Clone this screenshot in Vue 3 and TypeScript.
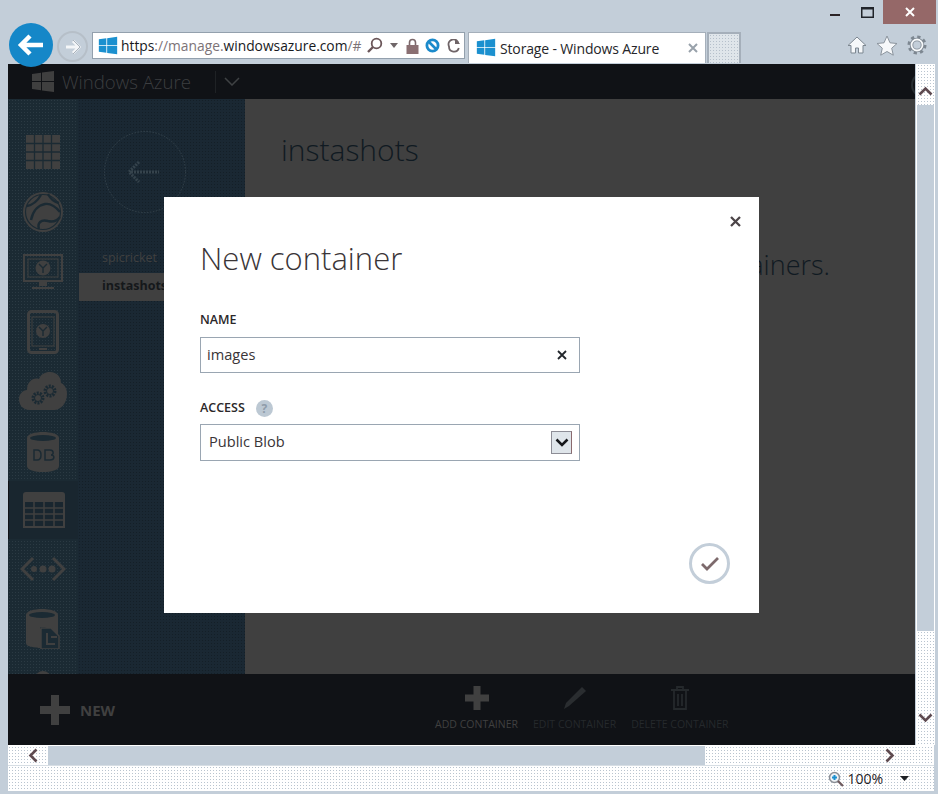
<script setup lang="ts">
import { ref } from 'vue'

const containerName = ref('images')
const access = ref('Public Blob')

const actions = [
  { label: 'ADD CONTAINER', dim: false },
  { label: 'EDIT CONTAINER', dim: true },
  { label: 'DELETE CONTAINER', dim: true },
]
</script>

<template>
  <div class="window">
    <header class="chrome">
      <div class="caption">
        <svg class="cap-min" width="10" height="3" viewBox="0 0 10 3"><rect width="10" height="2" y="1" fill="#2b2326" /></svg>
        <svg class="cap-max" width="13" height="11" viewBox="0 0 13 11"><rect x="0.75" y="0.75" width="11.5" height="9.5" fill="none" stroke="#20242a" stroke-width="1.5" /><rect x="0" y="0" width="13" height="2.5" fill="#20242a" /></svg>
        <div class="cap-close">
          <svg width="10" height="10" viewBox="0 0 10 10"><path d="M1 1l8 8M9 1l-8 8" stroke="#fff" stroke-width="2" /></svg>
        </div>
      </div>
      <div class="toolbar">
        <button class="back">
          <svg width="28" height="24" viewBox="0 0 28 24"><path d="M13 3L4 12l9 9M5 12h21" fill="none" stroke="#fff" stroke-width="4.5" /></svg>
        </button>
        <button class="forward">
          <svg width="18" height="16" viewBox="0 0 18 16"><path d="M9 2l6 6-6 6M14 8H2" fill="none" stroke="#f4f6f8" stroke-width="3" /><path d="M9 1l7 7-7 7" fill="none" stroke="#a9b2bb" stroke-width="1" /></svg>
        </button>
        <div class="address">
          <svg class="win-logo" width="20" height="20" viewBox="0 0 24 24"><path d="M1 4l9-1.200V11H1zM11 2.600L23 1v10H11zM1 12h9v8.200L1 19zM11 12h12v10l-12-1.600z" fill="#1b90cf" /></svg>
          <span class="url">https<span class="url-dim">://manage.</span>windowsazure.com<span class="url-dim">/#</span></span>
          <svg class="addr-icon search" width="17" height="17" viewBox="0 0 17 17"><circle cx="10.5" cy="6.5" r="4.8" fill="none" stroke="#6b5659" stroke-width="1.8" /><path d="M7 10l-5 5" stroke="#6b5659" stroke-width="2.4" /></svg>
          <svg class="addr-icon drop" width="8" height="5" viewBox="0 0 8 5"><path d="M0 0h8L4 5z" fill="#6f6668" /></svg>
          <svg class="addr-icon lock" width="13" height="16" viewBox="0 0 13 16"><path d="M3.5 7V4.5a3 3 0 016 0V7" fill="none" stroke="#7b686b" stroke-width="1.6" /><rect x="0.5" y="7" width="12" height="9" fill="#8a6f72" /></svg>
          <svg class="addr-icon block" width="15" height="15" viewBox="0 0 15 15"><circle cx="7.5" cy="7.5" r="5.6" fill="none" stroke="#1b8acb" stroke-width="2.8" /><path d="M4 4l7 7" stroke="#1b8acb" stroke-width="2.6" /></svg>
          <svg class="addr-icon refresh" width="14" height="14" viewBox="0 0 14 14"><path d="M11.5 5A5 5 0 102 7.500a5 5 0 009.800 1.500" fill="none" stroke="#6f6467" stroke-width="1.8" /><path d="M8 0v5h5z" fill="#6f6467" /></svg>
        </div>
        <div class="tab">
          <svg width="20" height="20" viewBox="0 0 24 24"><path d="M1 4l9-1.200V11H1zM11 2.600L23 1v10H11zM1 12h9v8.200L1 19zM11 12h12v10l-12-1.600z" fill="#1b90cf" /></svg>
          <span class="tab-title">Storage - Windows Azure</span>
          <svg class="tab-close" width="10" height="10" viewBox="0 0 10 10"><path d="M1 1l8 8M9 1l-8 8" stroke="#98a1aa" stroke-width="2" /></svg>
        </div>
        <div class="new-tab"></div>
        <div class="tools">
          <svg width="20" height="20" viewBox="0 0 20 20"><path d="M10 2L1 10.500h3V18h4.500v-5h3v5H16v-7.500h3z" fill="#f6f8fa" stroke="#7d8791" stroke-width="1" /></svg>
          <svg width="22" height="21" viewBox="0 0 22 21"><path d="M11 1l3 6.800 7 .7-5.300 4.700 1.600 7L11 16.500l-6.300 3.700 1.600-7L1 8.500l7-.7z" fill="#f6f8fa" stroke="#8b949d" stroke-width="1" /></svg>
          <svg width="20" height="20" viewBox="0 0 20 20"><circle cx="10" cy="10" r="7.500" fill="none" stroke="#7d8791" stroke-width="4" stroke-dasharray="3 2.890" /><circle cx="10" cy="10" r="5.500" fill="none" stroke="#7d8791" stroke-width="3.500" /><circle cx="10" cy="10" r="5.500" fill="none" stroke="#f6f8fa" stroke-width="1.800" /></svg>
        </div>
      </div>
    </header>

    <div class="middle">
      <div class="page">
        <div class="topbar">
          <svg class="brand-logo" width="24" height="24" viewBox="0 0 24 24"><path d="M1 4l9-1.200V11H1zM11 2.600L23 1v10H11zM1 12h9v8.200L1 19zM11 12h12v10l-12-1.600z" fill="#3f3f3f" /></svg>
          <span class="brand">Windows Azure</span>
          <span class="brand-sep"></span>
          <svg width="16" height="9" viewBox="0 0 16 9"><path d="M1 1l7 7 7-7" fill="none" stroke="#3f4244" stroke-width="1.500" /></svg>
          <span class="avatar"></span>
        </div>

        <div class="body">
          <nav class="rail">
            <div class="rail-item">
              <svg width="34" height="34" viewBox="0 0 34 34"><path d="M0 0h34v34H0z" fill="#404040" /><path d="M8.500 0v34M17 0v34M25.500 0v34M0 8.500h34M0 17h34M0 25.500h34" stroke="#1b2a33" stroke-width="1.300" /></svg>
            </div>
            <div class="rail-item">
              <svg width="42" height="42" viewBox="0 0 42 42"><circle cx="21" cy="21" r="20" fill="#404040" /><path d="M5 15c6-1 11-6 14-11M9 29c2-10 8-15 14-16 6-1 11 3 15 8M17 38c-2-6 2-10 9-8 4 1 9 0 12-4M26 3c2 4 6 8 11 9" fill="none" stroke="#1b2a33" stroke-width="2.400" /><circle cx="21" cy="21" r="17.500" fill="none" stroke="#1b2a33" stroke-width="1.200" /></svg>
            </div>
            <div class="rail-item">
              <svg width="40" height="36" viewBox="0 0 40 36"><rect x="1" y="1" width="38" height="26" fill="none" stroke="#404040" stroke-width="2" /><rect x="5" y="5" width="30" height="18" fill="none" stroke="#404040" stroke-width="1" /><circle cx="20" cy="14" r="7.500" fill="#404040" /><path d="M16 10l4 4 4-4M20 14v5" stroke="#1b2a33" stroke-width="1.400" fill="none" /><path d="M16 27h8v5h-8zM9 33h22v2H9z" fill="#404040" /></svg>
            </div>
            <div class="rail-item">
              <svg width="32" height="44" viewBox="0 0 32 44"><rect x="1.500" y="1.500" width="29" height="41" rx="3" fill="none" stroke="#404040" stroke-width="3" /><rect x="5" y="7" width="22" height="29" fill="none" stroke="#404040" stroke-width="1" /><circle cx="16" cy="21" r="7" fill="#404040" /><path d="M12 17l4 4 4-4M16 21v5" stroke="#1b2a33" stroke-width="1.400" fill="none" /><path d="M12 39h8" stroke="#404040" stroke-width="2" /></svg>
            </div>
            <div class="rail-item">
              <svg width="48" height="40" viewBox="0 0 48 40"><path d="M11 38C3 38 0 32 0 27s4-9 8-9c0-8 6-13 12-11 2-5 6-7 11-7 7 0 11 5 11 11 4 2 6 6 6 11 0 9-6 16-13 16z" fill="#404040" /><circle cx="19" cy="26" r="5" fill="none" stroke="#1b2a33" stroke-width="3" stroke-dasharray="2 1.100" /><circle cx="19" cy="26" r="3.500" fill="none" stroke="#1b2a33" stroke-width="1" /><circle cx="31" cy="19" r="5" fill="none" stroke="#1b2a33" stroke-width="3" stroke-dasharray="2 1.100" /><circle cx="31" cy="19" r="3.500" fill="none" stroke="#1b2a33" stroke-width="1" /></svg>
            </div>
            <div class="rail-item">
              <svg width="32" height="40" viewBox="0 0 32 40"><path d="M0 6c0-8 32-8 32 0v28c0 8-32 8-32 0z" fill="#404040" /><ellipse cx="16" cy="6" rx="13" ry="3" fill="#1b2a33" /><path d="M7 18h3c3 0 4 2 4 5s-1 5-4 5H7zM18 18h5c4 0 4 5 1 5 4 0 4 5-1 5h-5z" fill="none" stroke="#1b2a33" stroke-width="1.500" /></svg>
            </div>
            <div class="rail-item active">
              <svg width="42" height="36" viewBox="0 0 42 36"><path d="M0 3a3 3 0 013-3h36a3 3 0 013 3v7H0z" fill="#404040" /><rect x="1" y="9" width="40" height="26" fill="none" stroke="#404040" stroke-width="2" /><path d="M1 16h40M1 22h40M1 28h40M11 10v25M21 10v25M31 10v25" stroke="#404040" stroke-width="1.500" /></svg>
            </div>
            <div class="rail-item">
              <svg width="46" height="26" viewBox="0 0 46 26"><path d="M13 2L2 13l11 11M33 2l11 11-11 11" fill="none" stroke="#404040" stroke-width="3" /><circle cx="14" cy="13" r="3" fill="#404040" /><circle cx="23" cy="13" r="3.500" fill="#404040" /><circle cx="32" cy="13" r="3.500" fill="#404040" /></svg>
            </div>
            <div class="rail-item">
              <svg width="34" height="40" viewBox="0 0 34 40"><path d="M0 6c0-8 32-8 32 0v28c0 6-14 6-20 5V20h10z" fill="#404040" /><path d="M0 6v28c0 3 4 4 14 5V18h8V6z" fill="#404040" /><ellipse cx="16" cy="6" rx="13" ry="3" fill="#1b2a33" /><path d="M15 19h10l8 8v13H15z" fill="#1b2a33" stroke="#404040" stroke-width="1.500" /><path d="M21 24v11h8M25 28h6" stroke="#404040" stroke-width="2" fill="none" /></svg>
            </div>
            <div class="rail-item">
              <svg width="40" height="40" viewBox="0 0 40 40"><rect x="6" y="14" width="28" height="26" fill="#404040" /><circle cx="20" cy="10" r="8" fill="#404040" /></svg>
            </div>
          </nav>

          <aside class="list">
            <div class="list-head">
              <svg width="84" height="84" viewBox="0 0 84 84"><circle cx="42" cy="42" r="40.500" fill="none" stroke="#35434c" stroke-width="1" stroke-dasharray="1.500 1.500" /><path d="M36 32L26 42l10 10M28 42h28" fill="none" stroke="#35434c" stroke-width="3" stroke-dasharray="2 1" /></svg>
            </div>
            <div class="list-item">spicricket</div>
            <div class="list-item selected">instashots</div>
          </aside>

          <main class="content">
            <h1>instashots</h1>
            <p>You have no containers.</p>
          </main>
        </div>

        <footer class="cmdbar">
          <div class="new">
            <svg width="30" height="30" viewBox="0 0 30 30"><path d="M11 0h8v11h11v8H19v11h-8V19H0v-8h11z" fill="#404040" /></svg>
            <span>NEW</span>
          </div>
          <div class="cmds">
            <div v-for="(a, i) in actions" :key="a.label" class="cmd" :class="{ dim: a.dim }">
              <svg v-if="i === 0" width="24" height="24" viewBox="0 0 24 24"><path d="M8.500 0h7v8.500H24v7h-8.500V24h-7v-8.500H0v-7h8.500z" fill="#404040" /></svg>
              <svg v-else-if="i === 1" width="24" height="24" viewBox="0 0 24 24"><path d="M19 1l4 4L6 20l-5 3 2-6z" fill="#2a2d30" /></svg>
              <svg v-else width="20" height="24" viewBox="0 0 20 24"><path d="M1 4h18M7 4V1h6v3M4 5v18h12V5M8 8v12M12 8v12" fill="none" stroke="#25292c" stroke-width="1.800" /></svg>
              <span>{{ a.label }}</span>
            </div>
          </div>
        </footer>

        <section class="modal">
          <svg class="modal-close" width="11" height="11" viewBox="0 0 11 11"><path d="M1 1l9 9M10 1l-9 9" stroke="#4c4548" stroke-width="2.300" /></svg>
          <h2>New container</h2>
          <label class="field-label">NAME</label>
          <div class="input">
            <span class="value">{{ containerName }}</span>
            <svg width="10" height="10" viewBox="0 0 10 10"><path d="M1 1l8 8M9 1l-8 8" stroke="#22262b" stroke-width="1.800" /></svg>
          </div>
          <label class="field-label access">
            ACCESS
            <span class="help">?</span>
          </label>
          <div class="select">
            <span class="value">{{ access }}</span>
            <span class="select-arrow">
              <svg width="14" height="9" viewBox="0 0 14 9"><path d="M1.500 1.500L7 7l5.500-5.500" fill="none" stroke="#15171a" stroke-width="2.500" /></svg>
            </span>
          </div>
          <button class="confirm">
            <svg width="20" height="16" viewBox="0 0 20 16"><path d="M2 8l5 5L18 2" fill="none" stroke="#7d6a6c" stroke-width="2.800" /></svg>
          </button>
        </section>
      </div>

      <div class="vscroll">
        <div class="v-btn">
          <svg width="15" height="10" viewBox="0 0 15 10"><path d="M1.500 8.500l6-6 6 6" fill="none" stroke="#5e4a50" stroke-width="2.600" /></svg>
        </div>
        <div class="v-thumb"></div>
        <div class="v-track">
          <svg width="15" height="10" viewBox="0 0 15 10"><path d="M1.500 1.500l6 6 6-6" fill="none" stroke="#5e4a50" stroke-width="2.600" /></svg>
        </div>
      </div>
    </div>

    <div class="hscroll">
      <div class="h-btn">
        <svg width="10" height="15" viewBox="0 0 10 15"><path d="M8.500 1.500l-6 6 6 6" fill="none" stroke="#5e4a50" stroke-width="2.600" /></svg>
      </div>
      <div class="h-thumb"></div>
      <div class="h-track">
        <svg width="10" height="15" viewBox="0 0 10 15"><path d="M1.500 1.500l6 6-6 6" fill="none" stroke="#5e4a50" stroke-width="2.600" /></svg>
      </div>
    </div>

    <div class="status">
      <svg width="16" height="16" viewBox="0 0 16 16"><circle cx="6.500" cy="6.500" r="5" fill="#eef3f7" stroke="#8b8f96" stroke-width="1.500" /><path d="M4 6.500h5M6.500 4v5" stroke="#1b90cf" stroke-width="2" /><path d="M10 10l5 5" stroke="#6e5a5e" stroke-width="2.200" /></svg>
      <span class="zoom-level">100%</span>
      <svg class="zoom-drop" width="9" height="5" viewBox="0 0 9 5"><path d="M0 0h9L4.500 5z" fill="#1c1f24" /></svg>
    </div>
  </div>
</template>

<style scoped>
.window {
  width: 938px;
  height: 794px;
  overflow: hidden;
  display: flex;
  flex-direction: column;
  background: #c3ced9;
  font-family: "Open Sans", "Noto Sans", sans-serif;
  color: #2b2b2b;
}

button {
  border: none;
  padding: 0;
  background: none;
}

.chrome {
  height: 64px;
  flex: none;
}

.caption {
  height: 32px;
  display: flex;
  justify-content: flex-end;
  align-items: flex-start;
  padding-right: 2px;
}

.cap-min {
  margin: 13px 21px 0 0;
}

.cap-max {
  margin: 7px 9px 0 0;
}

.cap-close {
  width: 53px;
  height: 24px;
  background: #956868;
  display: flex;
  align-items: center;
  justify-content: center;
}

.toolbar {
  height: 32px;
  display: flex;
  align-items: flex-start;
  padding-left: 9px;
}

.back {
  width: 44px;
  height: 44px;
  margin-top: -9px;
  border-radius: 50%;
  background: #1587c8;
  display: flex;
  align-items: center;
  justify-content: center;
  position: relative;
  z-index: 2;
}

.forward {
  width: 31px;
  height: 31px;
  margin: -1px 0 0 4px;
  border-radius: 50%;
  border: 2px solid #b6bfc8;
  display: flex;
  align-items: center;
  justify-content: center;
}

.address {
  width: 373px;
  height: 27px;
  margin-left: 4px;
  box-sizing: border-box;
  border: 1px solid #93a0ad;
  background: #fff;
  display: flex;
  align-items: center;
  padding-left: 5px;
}

.win-logo {
  flex: none;
}

.url {
  margin-left: 3px;
  width: 244px;
  flex: none;
  color: #17191d;
  white-space: nowrap;
  font-size: 13.8px;
}

.url-dim {
  color: #7c7377;
}

.addr-icon {
  flex: none;
}

.search {
  margin-left: 1px;
}

.drop {
  margin-left: 7px;
}

.lock {
  margin-left: 8px;
}

.block {
  margin-left: 6px;
}

.refresh {
  margin-left: 7px;
}

.tab {
  width: 238px;
  height: 31px;
  margin-left: 3px;
  box-sizing: border-box;
  background: #fff;
  border: 1px solid #a5afba;
  border-bottom: none;
  display: flex;
  align-items: center;
  padding: 0 7px 0 7px;
}

.tab-title {
  margin-left: 4px;
  flex: 1;
  font-size: 14px;
  letter-spacing: -0.15px;
  color: #26262a;
  white-space: nowrap;
}

.new-tab {
  width: 34px;
  height: 31px;
  margin-left: 1px;
  box-sizing: border-box;
  border: 2px solid #a5afba;
  border-bottom: none;
  background: #dfe5ea radial-gradient(#b6c0cb 1px, transparent 1px) 0 0 / 3px 3px;
}

.tools {
  margin-left: 106px;
  display: flex;
  gap: 9px;
  align-items: center;
  height: 26px;
}

.middle {
  height: 681px;
  flex: none;
  display: flex;
}

.page {
  width: 907px;
  margin-left: 8px;
  display: flex;
  flex-direction: column;
  position: relative;
  background: #404040;
  overflow: hidden;
}

.topbar {
  height: 35px;
  flex: none;
  background: #101216;
  display: flex;
  align-items: center;
  padding-left: 23px;
  position: relative;
}

.brand {
  margin-left: 7px;
  font-size: 18.6px;
  font-weight: 300;
  color: #3c3e40;
  white-space: nowrap;
}

.brand-sep {
  width: 1px;
  height: 22px;
  margin: 0 8px 0 24px;
  background: #1f2225;
}

.avatar {
  position: absolute;
  right: -22px;
  top: 8px;
  width: 22px;
  height: 22px;
  border: 2px solid #272d31;
  border-radius: 50%;
}

.body {
  flex: 1;
  min-height: 0;
  display: flex;
}

.rail {
  width: 70px;
  flex: none;
  padding-top: 23px;
  box-sizing: border-box;
  overflow: hidden;
  background-color: #1b2a33;
  background-image: radial-gradient(#2b3a43 0.8px, transparent 0.8px);
  background-size: 3px 3px;
}

.rail-item {
  height: 60px;
  display: flex;
  align-items: center;
  justify-content: center;
  box-sizing: border-box;
}

.rail-item.active {
  height: 58px;
  margin-top: -1px;
  background: #19262f;
  border-left: 1px solid #101216;
}

.list {
  width: 167px;
  flex: none;
  background-color: #1a2833;
  background-image: radial-gradient(#141f27 0.7px, transparent 0.7px);
  background-size: 3px 3px;
  color: #404040;
  font-size: 12.5px;
}

.list-head {
  height: 146px;
  display: flex;
  justify-content: center;
  padding-top: 31px;
  box-sizing: border-box;
  padding-right: 34px;
}

.list-item {
  height: 28px;
  line-height: 26px;
  padding-left: 24px;
  white-space: nowrap;
}

.list-item.selected {
  margin: 0 0 0 1px;
  padding-left: 23px;
  background: #404040;
  color: #15181b;
  font-weight: 700;
}

.content {
  flex: 1;
  padding: 29px 0 0 36px;
  min-width: 0;
  white-space: nowrap;
  color: #101a22;
}

.content h1 {
  margin: 0;
  font-size: 30px;
  font-weight: 300;
  line-height: 44px;
}

.content p {
  margin: 73px 85px 0 0;
  font-size: 27px;
  font-weight: 300;
  line-height: 40px;
  text-align: right;
}

.cmdbar {
  height: 71px;
  flex: none;
  background: #101216;
  display: flex;
  position: relative;
}

.new {
  display: flex;
  align-items: center;
  gap: 10px;
  padding-left: 32px;
  color: #404040;
  font-size: 15px;
  font-weight: 700;
  height: 71px;
}

.cmds {
  margin-left: 320px;
  display: flex;
  gap: 15px;
  padding-top: 12px;
}

.cmd {
  display: flex;
  flex-direction: column;
  align-items: center;
  gap: 7px;
  font-size: 10.5px;
  color: #404040;
  white-space: nowrap;
}

.cmd.dim {
  color: #25292c;
}

.modal {
  position: absolute;
  left: 156px;
  top: 133px;
  width: 595px;
  height: 416px;
  box-sizing: border-box;
  padding: 38px 36px 0;
  background: #fff;
  z-index: 3;
}

.modal-close {
  position: absolute;
  top: 19px;
  right: 18px;
}

.modal h2 {
  margin: 0 0 30px;
  font-size: 31px;
  font-weight: 300;
  line-height: 46px;
  color: #3a3537;
}

.field-label {
  display: block;
  height: 18px;
  line-height: 18px;
  font-size: 12.5px;
  font-weight: 600;
  color: #2b2729;
}

.field-label.access {
  display: flex;
  align-items: center;
  gap: 11px;
  margin-top: 26px;
}

.help {
  width: 17px;
  height: 17px;
  border-radius: 50%;
  background: #bcc8d3;
  color: #8f9caa;
  font-size: 12px;
  font-weight: 700;
  line-height: 17px;
  text-align: center;
}

.input,
.select {
  width: 380px;
  box-sizing: border-box;
  border: 1px solid #9aa6b2;
  display: flex;
  align-items: center;
  justify-content: space-between;
  font-size: 14.6px;
  color: #3a3537;
}

.value {
  padding-bottom: 3px;
}

.input {
  height: 36px;
  margin-top: 8px;
  padding: 0 12px 0 6px;
}

.select {
  height: 37px;
  margin-top: 7px;
  padding: 0 7px 0 8px;
}

.select-arrow {
  width: 21px;
  height: 23px;
  box-sizing: border-box;
  border: 1px solid #8d8d96;
  border-right-color: #8a6a6e;
  background: #dfe5ea;
  display: flex;
  align-items: center;
  justify-content: center;
}

.confirm {
  position: absolute;
  right: 29px;
  bottom: 29px;
  width: 41px;
  height: 41px;
  box-sizing: border-box;
  border: 3px solid #c3ced9;
  border-radius: 50%;
  display: flex;
  align-items: center;
  justify-content: center;
}

.vscroll {
  width: 17px;
  margin-left: 2px;
  flex: none;
  display: flex;
  flex-direction: column;
  background: #eef1f4;
  box-shadow: -1px 0 0 #fff, 1px 0 0 #fff;
}

.v-btn,
.v-track,
.h-btn,
.h-track,
.status {
  background-color: #fff;
  background-image: radial-gradient(#b9c4cf 0.8px, transparent 0.8px);
  background-size: 3px 3px;
}

.v-btn {
  height: 41px;
  display: flex;
  align-items: flex-end;
  justify-content: center;
  padding-bottom: 9px;
  box-sizing: border-box;
}

.v-thumb {
  height: 526px;
  background: #c3ced9;
}

.v-track {
  flex: 1;
  display: flex;
  align-items: flex-end;
  justify-content: center;
  padding-bottom: 22px;
}

.hscroll {
  height: 20px;
  flex: none;
  margin: 0 4px 0 8px;
  display: flex;
  border-top: 1px solid #fff;
  box-sizing: border-box;
}

.h-btn {
  width: 40px;
  display: flex;
  align-items: center;
  justify-content: center;
  padding-left: 10px;
  box-sizing: border-box;
}

.h-thumb {
  width: 657px;
  background: #c3ced9;
}

.h-track {
  flex: 1;
  display: flex;
  align-items: center;
  padding-left: 180px;
}

.status {
  height: 26px;
  flex: none;
  margin: 0 4px 4px 8px;
  border-top: 1px solid #d7dee4;
  display: flex;
  align-items: center;
  justify-content: flex-end;
  padding-right: 25px;
  font-size: 14px;
  color: #1f2226;
  box-sizing: border-box;
}

.zoom-level {
  margin-left: 3px;
}

.zoom-drop {
  margin-left: 17px;
}
</style>
